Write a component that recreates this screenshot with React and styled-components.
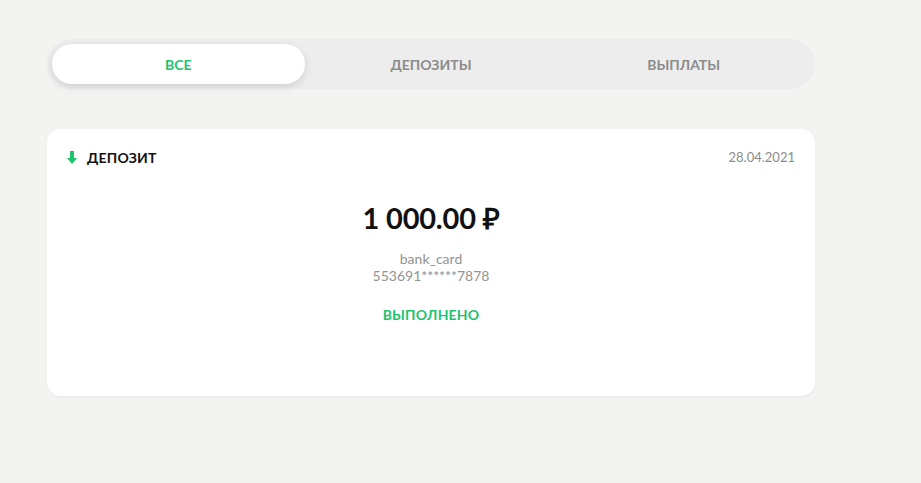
import React from "react";
import styled, { createGlobalStyle } from "styled-components";

const Global = createGlobalStyle`
  html, body { margin: 0; padding: 0; background: #f3f4f2; }
  body { font-family: Lato, "Open Sans", sans-serif; }
`;

const Page = styled.div`
  width: 921px;
  height: 483px;
  box-sizing: border-box;
  padding: 39px 0 0 47px;
  background: #f3f4f2;
`;

const Column = styled.div`
  width: 768px;
  display: flex;
  flex-direction: column;
  gap: 40px;
`;

const Tabs = styled.div`
  display: grid;
  grid-template-columns: repeat(3, 1fr);
  height: 50px;
  box-sizing: border-box;
  padding: 5px;
  background: #ededed;
  border-radius: 25px;
`;

const Tab = styled.button`
  border: 0;
  font-family: inherit;
  font-size: 14px;
  font-weight: 700;
  border-radius: 20px;
  cursor: pointer;
  color: ${(p) => (p.$active ? "#1dc36d" : "#8c8c8c")};
  background: ${(p) => (p.$active ? "#ffffff" : "transparent")};
  box-shadow: ${(p) => (p.$active ? "0 3px 8px rgba(0,0,0,0.12)" : "none")};
`;

const Card = styled.div`
  background: #fff;
  border-radius: 14px;
  height: 267px;
  box-sizing: border-box;
  padding: 20px 20px 0 20px;
  box-shadow: 0 1px 3px rgba(0,0,0,0.05);
  display: flex;
  flex-direction: column;
`;

const Header = styled.div`
  display: flex;
  align-items: center;
  justify-content: space-between;
  height: 16px;
`;

const Kind = styled.div`
  display: flex;
  align-items: center;
  gap: 10px;
  font-size: 14px;
  font-weight: 700;
  letter-spacing: 0.2px;
  color: #111;
`;

const DateText = styled.div`
  font-size: 13px;
  color: #8d8d8d;
`;

const Body = styled.div`
  display: flex;
  flex-direction: column;
  align-items: center;
  margin-top: 33px;
`;

const Amount = styled.div`
  font-size: 29px;
  font-weight: 700;
  color: #111;
  letter-spacing: -0.2px;
`;

const Method = styled.div`
  margin-top: 13px;
  font-size: 14px;
  color: #939393;
  line-height: 17px;
  text-align: center;
`;

const Status = styled.div`
  margin-top: 22px;
  font-size: 14px;
  font-weight: 700;
  color: #1dc36d;
  letter-spacing: 0.2px;
`;

const Arrow = () => (
  <svg width="10" height="13" viewBox="0 0 10 13">
    <path d="M3 0h4v7h3l-5 6-5-6h3z" fill="#1dc36d" />
  </svg>
);

export default function App() {
  return (
    <Page>
      <Global />
      <Column>
        <Tabs>
          <Tab $active>ВСЕ</Tab>
          <Tab>ДЕПОЗИТЫ</Tab>
          <Tab>ВЫПЛАТЫ</Tab>
        </Tabs>
        <Card>
          <Header>
            <Kind>
              <Arrow />
              ДЕПОЗИТ
            </Kind>
            <DateText>28.04.2021</DateText>
          </Header>
          <Body>
            <Amount>1 000.00 ₽</Amount>
            <Method>
              bank_card
              <br />
              553691******7878
            </Method>
            <Status>ВЫПОЛНЕНО</Status>
          </Body>
        </Card>
      </Column>
    </Page>
  );
}
